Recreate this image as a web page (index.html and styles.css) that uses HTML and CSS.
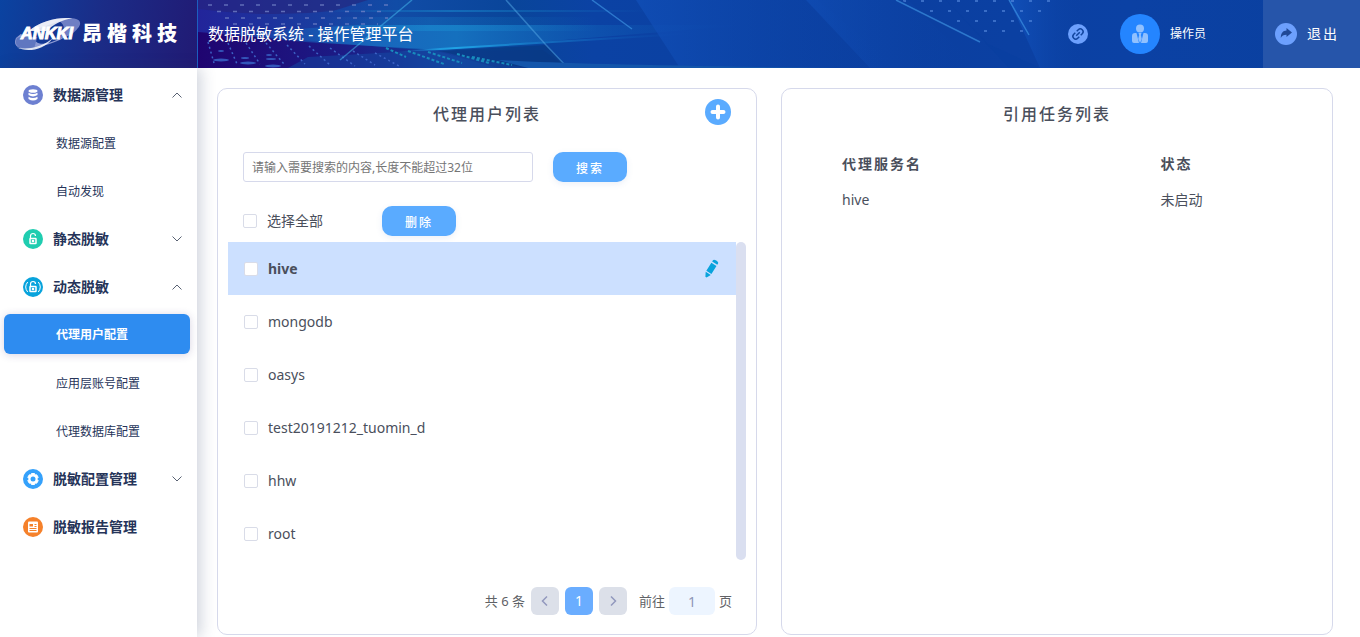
FILE: index.html
```html
<!DOCTYPE html>
<html lang="zh-CN">
<head>
<meta charset="utf-8">
<meta name="viewport" content="width=device-width, initial-scale=1">
<title>数据脱敏系统 - 操作管理平台</title>
<link rel="stylesheet" href="styles.css">
</head>
<body>
<header class="topbar">
  <a class="brand" href="#" aria-label="昂楷科技">
    <svg class="brand-mark" viewBox="0 0 70 34" aria-hidden="true">
      <path d="M14 15C27 3 47-1 62 1 72 3 69 10 58 18L45 23C52 16 54 9 47 4z" fill="#6f7fc4"/>
      <path d="M2 21C-3 33 12 34 26 30 40 27 50 22 56 18L42 24c-9 4-16 4-19 1L7 17z" fill="#8a98d2"/>
      <path d="M3 21C-2 32 12 33 21 31L24 20H6z" fill="#6077c0"/>
      <path d="M15 14C28 3 47-1 60 1 49 2 41 7 33 14zM3 31c14 3 28-2 37-10-9 13-27 15-37 10z" fill="#fff" opacity=".85"/>
      <text class="brand-latin" x="7" y="22">ANKKI</text>
    </svg>
    <span class="brand-name">昂楷科技</span>
  </a>
  <div class="banner">
    <svg class="banner-art" viewBox="0 0 1162 68" preserveAspectRatio="none" aria-hidden="true">
      <defs>
        <linearGradient id="base"><stop offset="0" stop-color="#22249a"/><stop offset=".09" stop-color="#1b3a9f"/><stop offset=".17" stop-color="#114ca6"/><stop offset=".27" stop-color="#09459a"/><stop offset=".34" stop-color="#0b42a4"/><stop offset=".6" stop-color="#0b3fa0"/><stop offset=".8" stop-color="#0b41a4"/><stop offset="1" stop-color="#0a409f"/></linearGradient>
        <linearGradient id="low"><stop offset="0" stop-color="#1f0470"/><stop offset=".4" stop-color="#1c1c86"/><stop offset=".7" stop-color="#13429c"/><stop offset="1" stop-color="#0a3a8e"/></linearGradient>
        <linearGradient id="beam"><stop offset="0" stop-color="#1558b5" stop-opacity="0"/><stop offset=".3" stop-color="#1867bd"/><stop offset=".45" stop-color="#1570be"/><stop offset="1" stop-color="#0c4bad" stop-opacity="0"/></linearGradient>
        <linearGradient id="glow"><stop offset="0" stop-color="#1a8fd2" stop-opacity="0"/><stop offset=".4" stop-color="#1a8fd2"/><stop offset="1" stop-color="#1a8fd2" stop-opacity="0"/></linearGradient>
        <linearGradient id="edge"><stop offset="0" stop-color="#20a4e6" stop-opacity="0"/><stop offset=".2" stop-color="#20a4e6"/><stop offset="1" stop-color="#0c4bad" stop-opacity="0"/></linearGradient>
        <linearGradient id="facet"><stop offset="0" stop-color="#1150b9"/><stop offset="1" stop-color="#0b41a4" stop-opacity="0"/></linearGradient>
        <pattern id="fine" width="18" height="20" patternUnits="userSpaceOnUse"><path d="M3 1h3M12 11h3" stroke="#578be0" stroke-width="1.5"/></pattern>
      </defs>
      <rect width="1162" height="68" fill="url(#base)"/>
      <path d="M0 9Q70 18 135 11L170 0H0z" fill="#27257c" opacity=".6"/>
      <path d="M0 32L100 40 235 51 345 50 370 68H0z" fill="url(#low)"/>
      <path d="M110 57L235 50 300 68H90z" fill="#1450a8" opacity=".45"/>
      <path d="M20 34L160 25H550L242 50 107 42z" fill="url(#beam)"/>
      <path d="M120 17H400V25H120z" fill="url(#glow)" opacity=".25"/>
      <path d="M120 25H400V31H120z" fill="url(#glow)" opacity=".5"/>
      <path d="M120 10H450V12H120z" fill="url(#glow)" opacity=".5"/>
      <path d="M195 52L242 50 500 34V32L242 48z" fill="url(#edge)"/>
      <path d="M242 51L348 45 370 68H330L270 58z" fill="#073983" opacity=".7"/>
      <path d="M438 0H620L700 68H482z" fill="url(#facet)" opacity=".7"/>
      <path d="M608 0H710L780 68H672z" fill="url(#facet)" opacity=".6"/>
      <path d="M811 0H885V68H842z" fill="url(#facet)"/>
      <path d="M748 0L790 44 842 68H811z" fill="#07409e" opacity=".3"/>
      <g stroke="#7484c8" stroke-width="1.500" stroke-dasharray="4 12" opacity=".75"><path d="M10 5H202M19 11.500H195M27 18H190M35 24H180"/></g>
      <path d="M702 0H862L835 32H775z" fill="url(#fine)" opacity=".8"/>
      <g fill="none" stroke="#3c62c5" stroke-width="1.500" stroke-dasharray="2 3"><path d="M10 42l6 21M30 43l9 21M48 43l14 21M68 43l18 21M89 45l18 19M111 46l21 19M132 48l25 18M155 51l22 14M177 53l24 13"/></g>
      <g fill="none" stroke="#188cbd" stroke-width="2" stroke-dasharray="3 2"><path d="M188 48l20 9M210 51l36 13M230 52l34 11M259 54l32 9M274 57l40 8"/></g>
      <g fill="#3456ba"><ellipse cx="23" cy="60" rx="8" ry="1.500"/><ellipse cx="50" cy="63" rx="8" ry="1.500"/><ellipse cx="75" cy="66" rx="8" ry="1.500"/><ellipse cx="23" cy="51" rx="3" ry="1"/><ellipse cx="47" cy="58" rx="4" ry="1"/><ellipse cx="71" cy="55" rx="3" ry="1"/><ellipse cx="73" cy="59" rx="5" ry="1"/></g>
      <path d="M214 0L142 60" stroke="#42b3e9" stroke-width="1.500" opacity=".55"/>
      <path d="M308 0L348 45 370 68" fill="none" stroke="#54a7e5" stroke-width="1.500" opacity=".5"/>
      <path d="M394 0L434 29M698 0L782 42M811 0L831 35" stroke="#439ce9" stroke-width="1.500" opacity=".6"/>
      <path d="M300 60Q380 65 640 68H330z" fill="#1456ab"/>
    </svg>
    <h1 class="system-title">数据脱敏系统 - 操作管理平台</h1>
    <nav class="tools" aria-label="账户">
      <button class="link-button" aria-label="链接">
        <svg viewBox="0 0 20 20"><circle cx="10" cy="10" r="10" fill="#6da0fd"/><g transform="rotate(-45 10 10)" fill="none" stroke="#12459f" stroke-width="1.500"><path d="M9 7.200H6.800a2.800 2.800 0 0 0 0 5.600H9M11 7.200h2.200a2.800 2.800 0 0 1 0 5.600H11M7.500 10h5"/></g></svg>
      </button>
      <button class="user-button">
        <svg viewBox="0 0 40 40" aria-hidden="true"><circle cx="20" cy="20" r="20" fill="#2485ff"/><g fill="#90c1ff"><circle cx="20" cy="14.500" r="4"/><path d="M12 22q0-3 3-3h1.500l2.500 10H14q-2 0-2-2zM28 22q0-3-3-3h-1.500L21 29h5q2 0 2-2z"/><path d="M18.500 19h3l-.7 2 1 4L20 29l-1.800-4 1-4z"/></g></svg>
        <span>操作员</span>
      </button>
      <button class="exit-button">
        <svg viewBox="0 0 22 22" aria-hidden="true"><circle cx="11" cy="11" r="11" fill="#6da0fd"/><path d="M17 9.500L11.500 5v2.600C8 7.800 5.800 10 5.800 15c1.200-2.200 2.700-3.300 5.700-3.300V14z" fill="#204997"/></svg>
        <span>退出</span>
      </button>
    </nav>
  </div>
</header>
<div class="workspace">
  <nav class="sidebar" aria-label="主菜单">
    <button class="menu-group">
      <svg class="menu-icon" viewBox="0 0 20 20"><circle cx="10" cy="10" r="10" fill="#6d80d1"/><ellipse cx="10" cy="6" rx="4.500" ry="1.800" fill="#fff"/><path d="M5.500 7.700q4.500 2.600 9 0v2.400q-4.500 2.600-9 0zM5.500 11.700q4.500 2.600 9 0v2.300q-4.500 3-9 0z" fill="#fff"/></svg>
      <span>数据源管理</span>
      <svg class="chevron" viewBox="0 0 10 6"><path d="M.5 5.500L5 1l4.500 4.500"/></svg>
    </button>
    <a class="menu-link" href="#">数据源配置</a>
    <a class="menu-link" href="#">自动发现</a>
    <button class="menu-group">
      <svg class="menu-icon" viewBox="0 0 20 20"><circle cx="10" cy="10" r="10" fill="#20cdb0"/><g fill="none" stroke="#fff"><path d="M7.500 9V7a2.500 2.500 0 0 1 5 0" stroke-width="1.200"/><rect x="7" y="9.500" width="6" height="5" rx=".5" stroke-width="1.500"/></g><circle cx="10" cy="12" r="1.300" fill="#fff"/></svg>
      <span>静态脱敏</span>
      <svg class="chevron" viewBox="0 0 10 6"><path d="M.5.500L5 5 9.500.500"/></svg>
    </button>
    <button class="menu-group">
      <svg class="menu-icon" viewBox="0 0 20 20"><circle cx="10" cy="10" r="10" fill="#08a3dc"/><g fill="none" stroke="#fff"><path d="M7.500 9V7a2.500 2.500 0 0 1 5 0" stroke-width="1.200"/><rect x="7" y="9.500" width="6" height="5" rx=".5" stroke-width="1.500"/><path d="M4.700 5Q.700 10 4.700 15M15.300 5q4 5 0 10"/></g><circle cx="10" cy="12" r="1.300" fill="#fff"/></svg>
      <span>动态脱敏</span>
      <svg class="chevron" viewBox="0 0 10 6"><path d="M.5 5.500L5 1l4.500 4.500"/></svg>
    </button>
    <a class="menu-link active" href="#" aria-current="page">代理用户配置</a>
    <a class="menu-link" href="#">应用层账号配置</a>
    <a class="menu-link" href="#">代理数据库配置</a>
    <button class="menu-group">
      <svg class="menu-icon" viewBox="0 0 20 20"><circle cx="10" cy="10" r="10" fill="#35a1fb"/><path d="M8.500 4.500h3l.6 1.500 1.600-.2 1.500 2.500-1 1.200v1l1 1.200-1.500 2.500-1.600-.2-.6 1.500h-3l-.6-1.500-1.600.2-1.500-2.500 1-1.200v-1l-1-1.200 1.500-2.500 1.600.2z" fill="#fff" stroke="#fff" stroke-linejoin="round"/><circle cx="10" cy="10" r="2.500" fill="#35a1fb"/></svg>
      <span>脱敏配置管理</span>
      <svg class="chevron" viewBox="0 0 10 6"><path d="M.5.500L5 5 9.500.500"/></svg>
    </button>
    <button class="menu-group">
      <svg class="menu-icon" viewBox="0 0 20 20"><circle cx="10" cy="10" r="10" fill="#f5812b"/><rect x="5" y="4.500" width="10" height="11" rx="1" fill="#fff"/><path d="M6.500 7h3.500v2.500H6.500z" fill="#f5812b"/><path d="M11.500 7.500h2M11.500 9.500h2M6.500 11.500h7M6.500 13.500h7" stroke="#f5812b" stroke-width="1"/></svg>
      <span>脱敏报告管理</span>
    </button>
  </nav>
  <main class="content">
    <section class="panel users">
      <div class="panel-head">
        <h2>代理用户列表</h2>
        <button class="add-button" aria-label="新增">
          <svg viewBox="0 0 26 26"><circle cx="13" cy="13" r="13" fill="#5aabff"/><path d="M13 7.500v11M7.500 13h11" stroke="#fff" stroke-width="4" stroke-linecap="round"/></svg>
        </button>
      </div>
      <form class="search-row">
        <input class="search-input" type="text" aria-label="搜索" placeholder="请输入需要搜索的内容,长度不能超过32位">
        <button class="action" type="button">搜索</button>
      </form>
      <div class="bulk-row">
        <label class="check-label"><input type="checkbox"><span>选择全部</span></label>
        <button class="action">删除</button>
      </div>
      <div class="list-area">
        <ul class="user-list">
          <li class="selected"><label class="check-label"><input type="checkbox"><span>hive</span></label>
            <button class="edit-button" aria-label="编辑"><svg viewBox="0 0 20 20"><g transform="rotate(32 10 10)" fill="#08a3dc"><path d="M7 3V1.500Q7 0 10 0t3 1.500V3zM7 4.500h6V14H7zM7 15.200h6l-2.300 4.300h-1.400z"/></g></svg></button></li>
          <li><label class="check-label"><input type="checkbox"><span>mongodb</span></label></li>
          <li><label class="check-label"><input type="checkbox"><span>oasys</span></label></li>
          <li><label class="check-label"><input type="checkbox"><span>test20191212_tuomin_d</span></label></li>
          <li><label class="check-label"><input type="checkbox"><span>hhw</span></label></li>
          <li><label class="check-label"><input type="checkbox"><span>root</span></label></li>
        </ul>
        <div class="scroll-thumb"></div>
      </div>
      <nav class="pager" aria-label="分页">
        <span class="pager-total">共 6 条</span>
        <button aria-label="上一页"><svg viewBox="0 0 8 10"><path d="M6 .5L1.500 5 6 9.500"/></svg></button>
        <button class="current">1</button>
        <button aria-label="下一页"><svg viewBox="0 0 8 10"><path d="M2 .5L6.500 5 2 9.500"/></svg></button>
        <label class="pager-jump"><span>前往</span><input type="text" value="1"><span>页</span></label>
      </nav>
    </section>
    <section class="panel tasks">
      <div class="panel-head"><h2>引用任务列表</h2></div>
      <table class="task-table">
        <thead><tr><th scope="col">代理服务名</th><th scope="col">状态</th></tr></thead>
        <tbody><tr><td>hive</td><td>未启动</td></tr></tbody>
      </table>
    </section>
  </main>
</div>
</body>
</html>
```
FILE: styles.css
```css
* { box-sizing: border-box; }
body {
  margin: 0;
  min-height: 100vh;
  display: flex;
  flex-direction: column;
  background: #fff;
  color: #4a4f5c;
  font: 14px/20px "Noto Sans", "Noto Sans CJK SC", sans-serif;
}
button { border: 0; padding: 0; background: none; color: inherit; font: inherit; cursor: pointer; }
input { font: inherit; }
a { color: inherit; text-decoration: none; }
h1, h2 { margin: 0; }
svg { display: block; flex: none; }

.topbar { display: flex; height: 68px; color: #fff; }
.brand {
  flex: none;
  display: flex;
  align-items: center;
  width: 198px;
  padding-left: 14px;
  border-right: 1px solid #1c5fc0;
  background: linear-gradient(100deg, #0a43a1, #1b2c87 50%, #211a74);
}
.brand-mark { width: 68px; height: 34px; }
.brand-latin { font: italic 900 17px "Liberation Sans", Arial, sans-serif; fill: #fff; stroke: #fff; stroke-width: 1px; }
.brand-name { font-size: 20px; line-height: 28px; font-weight: 900; letter-spacing: 5px; white-space: nowrap; }
.banner { position: relative; flex: 1; display: flex; align-items: center; justify-content: space-between; padding-left: 10px; background: #0b41a4; }
.banner-art { position: absolute; inset: 0; width: 100%; height: 100%; }
.system-title { position: relative; font-size: 16px; line-height: 24px; font-weight: 400; white-space: nowrap; }
.tools { position: relative; align-self: stretch; display: flex; }
.link-button { padding: 0 16px; }
.link-button svg { width: 20px; height: 20px; }
.user-button { display: flex; align-items: center; gap: 10px; margin: 0 57px 0 16px; font-size: 12px; }
.user-button svg { width: 40px; height: 40px; }
.exit-button { display: flex; align-items: center; gap: 10px; padding: 0 21px 0 12px; background: #2655aa; font-size: 14px; letter-spacing: 2px; }
.exit-button svg { width: 22px; height: 22px; }

.workspace { flex: 1; display: flex; }
.sidebar { flex: none; width: 197px; padding-top: 3px; box-shadow: 4px 0 14px rgba(40, 60, 100, 0.22); color: #263459; }
.menu-group { display: flex; align-items: center; gap: 10px; width: 100%; height: 48px; padding: 0 15px 0 23px; font-weight: 700; text-align: left; }
.menu-icon { width: 20px; height: 20px; }
.chevron { width: 10px; height: 6px; margin-left: auto; fill: none; stroke: #596273; stroke-width: 1; }
.menu-link { display: flex; align-items: center; height: 48px; padding: 2px 0 0 56px; font-size: 12px; }
.menu-link.active { height: 40px; margin: 3px 7px 5px 4px; padding-left: 52px; border-radius: 6px; background: #2e8cf0; color: #fff; font-weight: 700; box-shadow: 0 1px 8px rgba(60, 40, 110, 0.2); }

.content { flex: 1; display: grid; grid-template-columns: 540fr 552fr; gap: 24px; padding: 20px 27px 2px 20px; }
.panel { border: 1px solid #d6d9eb; border-radius: 10px; min-width: 0; }
.users { display: flex; flex-direction: column; padding: 0 10px 19px; }
.panel-head { position: relative; padding: 13px 0; text-align: center; }
.panel-head h2 { font-size: 16px; line-height: 24px; font-weight: 500; letter-spacing: 2px; }
.add-button { position: absolute; top: 10px; right: 15px; }
.add-button svg { width: 26px; height: 26px; }
.search-row { display: flex; gap: 20px; margin-top: 13px; padding-left: 15px; }
.search-input { width: 290px; height: 30px; padding: 0 8px; border: 1px solid #d6d9eb; border-radius: 3px; font-size: 12px; color: #666; }
.search-input::placeholder { color: #757575; opacity: 1; }
.action { width: 74px; height: 30px; padding-top: 3px; border-radius: 10px; background: #5aabff; box-shadow: 0 2px 6px rgba(90, 120, 190, 0.12); color: #fff; font-size: 12px; font-weight: 500; letter-spacing: 2px; }
.bulk-row { display: flex; align-items: center; justify-content: space-between; width: 228px; margin-top: 24px; padding-left: 15px; }
.check-label { display: flex; align-items: center; gap: 10px; }
input[type="checkbox"] { appearance: none; width: 14px; height: 14px; margin: 0; border: 1px solid #d9dce8; border-radius: 2px; background: #fff; }
.list-area { display: flex; margin-top: 6px; }
.user-list { flex: 1; margin: 0; padding: 0; list-style: none; }
.user-list li { display: flex; align-items: center; justify-content: space-between; height: 53px; padding: 0 15px 0 16px; }
.user-list .selected { background: #cce0ff; font-weight: 700; }
.edit-button svg { width: 20px; height: 20px; }
.scroll-thumb { width: 10px; border-radius: 5px; background: #dadff0; }
.pager { display: flex; align-items: center; justify-content: flex-end; gap: 6px; margin-top: auto; padding-right: 14px; font-size: 13px; color: #606266; }
.pager button { display: flex; align-items: center; justify-content: center; width: 28px; height: 28px; border-radius: 6px; background: #dce0e9; }
.pager button svg { width: 8px; height: 10px; fill: none; stroke: #9298bd; stroke-width: 1.5; }
.pager .current { background: #6aadff; color: #fff; font-size: 14px; }
.pager-jump { display: flex; align-items: center; gap: 4px; padding-left: 6px; }
.pager-jump input { width: 46px; height: 28px; padding: 0; border: 0; border-radius: 6px; background: #edf5ff; color: #8e96b8; font-size: 14px; text-align: center; }
.task-table { width: calc(100% - 60px); margin: 13px 0 0 60px; border-collapse: collapse; table-layout: fixed; text-align: left; }
.task-table th, .task-table td { padding: 0; }
.task-table th { height: 24px; font-weight: 700; letter-spacing: 2px; }
.task-table td { height: 48px; }
.task-table th:first-child { width: 65%; }
```
